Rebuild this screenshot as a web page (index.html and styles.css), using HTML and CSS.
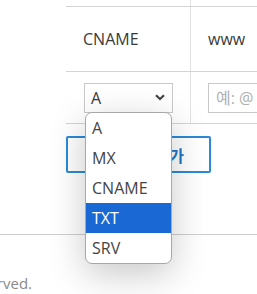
FILE: index.html
```html
<!DOCTYPE html>
<html lang="ko">
<head>
    <meta charset="UTF-8">
    <meta name="viewport" content="width=device-width, initial-scale=1.0">
    <title>DNS 레코드</title>
    <link rel="stylesheet" href="styles.css">
</head>
<body>

<div class="page">
    <div class="records">
        <div class="row row-prev">
            <div class="cell cell-type"></div>
            <div class="cell"></div>
        </div>
        <div class="row row-data">
            <div class="cell cell-type">CNAME</div>
            <div class="cell">www</div>
        </div>
        <div class="row row-new">
            <div class="cell cell-type">
                <div class="select-wrap">
                    <div class="select-box">
                        <span>A</span>
                        <svg class="chevron" width="10" height="7" viewBox="0 0 10 7">
                            <path d="M1 1.2 L5 5 L9 1.2" fill="none" stroke="#454545" stroke-width="2.2"/>
                        </svg>
                    </div>
                    <ul class="select-menu">
                        <li>A</li>
                        <li>MX</li>
                        <li>CNAME</li>
                        <li class="active">TXT</li>
                        <li>SRV</li>
                    </ul>
                </div>
            </div>
            <div class="cell">
                <input type="text" class="name-input" placeholder="예: @ 또는 www">
            </div>
        </div>
    </div>

    <button class="add-btn">+ 레코드 추가</button>
</div>

<footer class="footer">
    <div class="footer-inner">
        <p>© 2024 DNS Manager. All rights reserved.</p>
    </div>
</footer>

</body>
</html>
```

FILE: styles.css
```css
body {
    font-family: 'Open Sans', 'Noto Sans CJK KR', sans-serif;
    margin: 0;
    width: 257px;
    height: 294px;
    overflow: hidden;
    background: white;
    color: #3a3a3a;
}
.page {
    padding-left: 66px;
    height: 234px;
}
.records {
    width: 300px;
}
.row {
    display: grid;
    grid-template-columns: 125px 1fr;
    border-bottom: 1px solid #d4d4d4;
}
.cell {
    display: flex;
    align-items: center;
    padding-left: 17px;
    font-size: 16px;
}
.cell-type {
    border-right: 1px solid #e2e2e2;
    padding-left: 17px;
}
.row-prev {
    height: 6px;
}
.row-data {
    height: 64px;
}
.row-new {
    height: 51px;
}
.row-new .cell-type {
    padding-left: 18px;
}
.select-wrap {
    position: relative;
    width: 89px;
}
.select-box {
    box-sizing: border-box;
    height: 30px;
    border: 1px solid #c8c8c8;
    display: flex;
    align-items: center;
    justify-content: space-between;
    padding: 0 7px 0 6px;
    font-size: 16px;
    color: #3a3a3a;
    background: white;
}
.chevron {
    display: block;
}
.select-menu {
    position: absolute;
    top: 29px;
    left: 1px;
    width: 87px;
    box-sizing: border-box;
    margin: 0;
    padding: 0;
    list-style: none;
    background: white;
    border: 1px solid #a8a8a8;
    border-radius: 7px;
    overflow: hidden;
    box-shadow: 0 10px 36px rgba(0, 0, 0, 0.22);
    z-index: 10;
}
.select-menu li {
    height: 30px;
    line-height: 30px;
    padding-left: 6px;
    font-size: 16px;
    color: #444;
}
.select-menu li.active {
    background-color: #1a68d4;
    color: white;
}
.name-input {
    box-sizing: border-box;
    width: 120px;
    height: 30px;
    border: 1px solid #c8c8c8;
    padding: 0 7px;
    font-family: 'Open Sans', 'Noto Sans CJK KR', sans-serif;
    font-size: 16px;
}
.name-input::placeholder {
    color: #b0b0b0;
}
.add-btn {
    display: block;
    margin-top: 12px;
    width: 145px;
    height: 37px;
    background: white;
    border: 2px solid #2a8ad8;
    border-radius: 2px;
    color: #2277c9;
    font-family: 'Open Sans', 'Noto Sans CJK KR', sans-serif;
    font-size: 16px;
    font-weight: 600;
    cursor: pointer;
}
.footer {
    border-top: 1px solid #cfcfcf;
    padding-top: 38px;
}
.footer-inner {
    display: flex;
    justify-content: flex-end;
    width: 32px;
}
.footer-inner p {
    margin: 0;
    white-space: nowrap;
    font-size: 15px;
    color: #8a8a8a;
}
```
